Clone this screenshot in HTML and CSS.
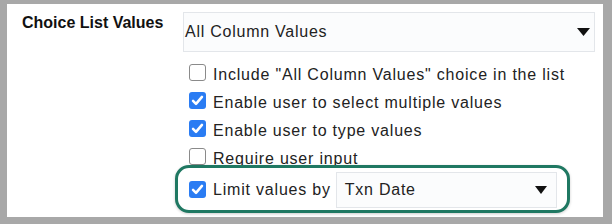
FILE: index.html
```html
<!DOCTYPE html>
<html lang="en">
<head>
  <meta charset="UTF-8" />
  <title>Choice List Values</title>
  <link rel="stylesheet" href="styles.css">
</head>
<body>
  <div class="frame">
    <div class="prop-label">Choice List Values</div>
    <div class="prop-field">
      <div class="dropdown">
        <span>All Column Values</span>
        <svg class="caret" width="13" height="8" viewBox="0 0 13 8"><polygon points="0,0 13,0 6.5,8" fill="#111"/></svg>
      </div>

      <ul class="options">
        <li class="option"><span class="box"></span>Include "All Column Values" choice in the list</li>
        <li class="option"><span class="box checked"><svg width="17" height="17" viewBox="0 0 16 16"><path d="M3.8 8.4 L6.6 11.2 L12.2 4.6" fill="none" stroke="#fff" stroke-width="2.4" stroke-linecap="round" stroke-linejoin="round"/></svg></span>Enable user to select multiple values</li>
        <li class="option"><span class="box checked"><svg width="17" height="17" viewBox="0 0 16 16"><path d="M3.8 8.4 L6.6 11.2 L12.2 4.6" fill="none" stroke="#fff" stroke-width="2.4" stroke-linecap="round" stroke-linejoin="round"/></svg></span>Enable user to type values</li>
        <li class="option"><span class="box"></span>Require user input</li>
        <!-- ligne mise en évidence -->
        <li class="option limit">
          <span class="box checked"><svg width="17" height="17" viewBox="0 0 16 16"><path d="M3.8 8.4 L6.6 11.2 L12.2 4.6" fill="none" stroke="#fff" stroke-width="2.4" stroke-linecap="round" stroke-linejoin="round"/></svg></span>
          <span class="limit-label">Limit values by</span>
          <div class="dropdown small">
            <span>Txn Date</span>
            <svg class="caret" width="12" height="8" viewBox="0 0 12 8"><polygon points="0,0 12,0 6,8" fill="#111"/></svg>
          </div>
        </li>
      </ul>
    </div>
  </div>
</body>
</html>
```

FILE: styles.css
```css
body {
  margin: 0;
  font-family: "Liberation Sans", Arial, sans-serif;
  color: #222;
  background: #fff;
}
.frame {
  width: 612px;
  height: 224px;
  box-sizing: border-box;
  border-style: solid;
  border-color: #a8a8a8;
  border-width: 4px 9px 7px 7px;
  background: #fff;
  display: grid;
  grid-template-columns: 176px 1fr;
  align-items: start;
  padding: 8px 8px 0 0;
}
.prop-label {
  font-weight: bold;
  font-size: 16px;
  line-height: 18px;
  color: #111;
  padding: 2px 0 0 15px;
}
.dropdown {
  height: 40px;
  box-sizing: border-box;
  border: 1px solid #e3e6ea;
  background: #fbfcfd;
  display: flex;
  align-items: center;
  justify-content: space-between;
  padding: 0 4px 0 1px;
  font-size: 16px;
  letter-spacing: 0.75px;
  color: #222;
}
.dropdown.small {
  flex: 0 1 222px;
  min-width: 0;
  height: 36px;
  padding: 0 9px 0 8px;
}
.options {
  list-style: none;
  margin: 8.5px 0 0 0;
  padding: 0;
}
.option {
  display: flex;
  align-items: center;
  height: 28px;
  line-height: 28px;
  padding-left: 6px;
  font-size: 16px;
  letter-spacing: 0.8px;
  color: #222;
  white-space: nowrap;
}
.box {
  width: 17px;
  height: 17px;
  box-sizing: border-box;
  border: 1.5px solid #8a8a8a;
  border-radius: 3px;
  background: #fff;
  margin: 0 7px 4px 0;
  flex: none;
  display: flex;
}
.box.checked {
  border: none;
  background: #2a7cf3;
}
.option.limit {
  position: relative;
  height: 48px;
  width: 395px;
  margin: -7.5px 0 0 -8px;
  padding: 1px 10px 0 11px;
  border: 3px solid #1f7862;
  border-radius: 14px;
  background: #fff;
  box-shadow: 0 1px 3px rgba(0,0,0,0.2);
  box-sizing: border-box;
}
.option.limit .box {
  margin-bottom: 0;
}
.limit-label {
  flex: none;
}
.option.limit .dropdown {
  margin-left: 5px;
}
```
